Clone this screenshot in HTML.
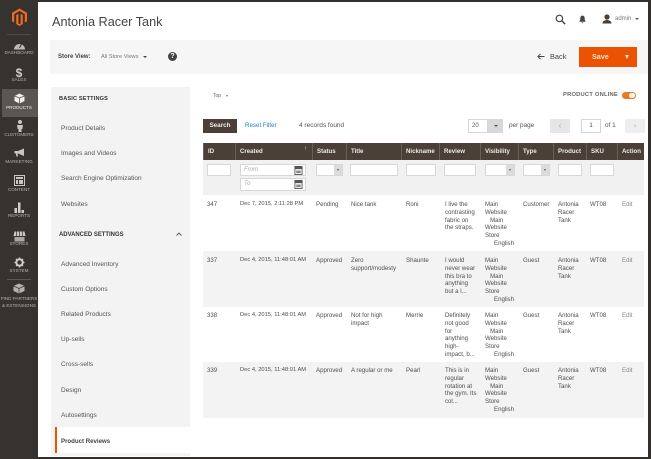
<!DOCTYPE html>
<html><head><meta charset="utf-8">
<style>
html,body{margin:0;padding:0}
body{width:651px;height:459px;position:relative;overflow:hidden;background:#fff;font-family:"Liberation Sans",sans-serif;color:#4a4a4a}
div,span,svg{position:absolute}
#w{left:0;top:0;width:651px;height:459px;overflow:hidden;background:#fff;filter:blur(.35px)}
.t{white-space:nowrap;font-size:7px;line-height:8px}
.nav{left:0;width:38px;text-align:center;font-size:4.6px;line-height:6px;color:#b5b2ae;white-space:nowrap}
.m{left:61px;font-size:6.5px;line-height:9px;color:#555;white-space:nowrap}
.h{top:143px;height:17px;line-height:18px;font-size:6.1px;font-weight:bold;color:#eeeae6;background:#4b3f38;border-left:1px solid #6a5f58;padding-left:4px;box-sizing:border-box;white-space:nowrap}
.inp{height:10px;background:#fff;border:1px solid #d8d8d8;box-sizing:border-box}
.c{font-size:6.1px;line-height:7.8px;color:#4f4f4f;white-space:nowrap}
.d{font-size:5.75px}
.sel{width:8px;height:10px;background:#dcdcdc;font-size:4px;line-height:10px;text-align:center;color:#555}
</style></head>
<body>
<div id="w">
<div style="left:0;top:0;width:651px;height:2px;background:#33302c"></div>
<div style="left:648px;top:0;width:3px;height:459px;background:#33302c"></div>
<div style="left:0;top:457px;width:651px;height:2px;background:#33302c"></div>
<div style="left:0;top:0;width:38px;height:459px;background:#353230"></div>
<div style="left:2px;top:89px;width:36px;height:28px;background:#5a5653"></div>

<svg style="left:11px;top:8px" width="17" height="18" viewBox="0 0 17 18"><path d="M8.5 0.5L16 4.8V13.4L13.8 14.6V6.1L8.5 3 3.2 6.1V14.6L1 13.4V4.8Z M7.4 5.8V15.5L8.5 16.2 9.6 15.5V5.8L11.8 7V16L8.5 18 5.2 16V7Z" fill="#ef6a23"/></svg>
<div style="left:7px;top:34px;width:24px;height:1px;background:#4d4945"></div>

<svg style="left:13px;top:41px" width="13" height="9" viewBox="0 0 13 9"><path d="M1 8.5A5.5 5.5 0 1 1 12 8.5Z" fill="#bdbab6"/><path d="M6.5 7L8.5 3" stroke="#373330" stroke-width="1"/></svg>
<div class="nav" style="top:50px">DASHBOARD</div>
<div class="nav" style="top:66px;font-size:12px;line-height:14px;color:#cfccc8;font-weight:bold">$</div>
<div class="nav" style="top:77px">SALES</div>
<svg style="left:14px;top:93px" width="11" height="11" viewBox="0 0 11 11"><path d="M5.5 0.5L10.5 3V8L5.5 10.5 0.5 8V3Z" fill="#f0efed"/><path d="M5.5 5V10.5M0.5 3L5.5 5 10.5 3" stroke="#54504c" stroke-width="0.8" fill="none"/></svg>
<div class="nav" style="top:105px;color:#f2efec">PRODUCTS</div>
<svg style="left:16px;top:120px" width="8" height="12" viewBox="0 0 8 12"><circle cx="4" cy="2" r="2" fill="#c8c5c1"/><path d="M1 5H7L6.4 9H5.5V12H2.5V9H1.6Z" fill="#c8c5c1"/></svg>
<div class="nav" style="top:132px">CUSTOMERS</div>
<svg style="left:14px;top:148px" width="11" height="9" viewBox="0 0 11 9"><path d="M0.5 3H4L10 0.5V8L4 5.5H3.5L4 8.5H2.5L1.8 5.5H0.5Z" fill="#c8c5c1"/></svg>
<div class="nav" style="top:159px">MARKETING</div>
<svg style="left:14px;top:175px" width="11" height="11" viewBox="0 0 11 11"><rect x="0.5" y="0.5" width="10" height="10" fill="none" stroke="#c8c5c1"/><rect x="2" y="2" width="7" height="2" fill="#c8c5c1"/><rect x="2" y="5" width="2" height="4" fill="#c8c5c1"/><rect x="5" y="5" width="4" height="4" fill="#c8c5c1"/></svg>
<div class="nav" style="top:187px">CONTENT</div>
<svg style="left:14px;top:202px" width="11" height="12" viewBox="0 0 11 12"><rect x="0.5" y="6" width="2.5" height="5" fill="#d0cdc9"/><rect x="4" y="0.5" width="2.5" height="10.5" fill="#d0cdc9"/><rect x="7.5" y="8" width="2.5" height="3" fill="#d0cdc9"/></svg>
<div class="nav" style="top:213px">REPORTS</div>
<svg style="left:13px;top:231px" width="13" height="11" viewBox="0 0 13 11"><path d="M1.5 0.5H11.5L12.5 5H0.5Z" fill="#c8c5c1"/><path d="M1.5 6H11.5V10.5H1.5Z" fill="#a9a6a2"/><path d="M3.5 0.5V5M6.5 0.5V5M9.5 0.5V5" stroke="#373330" stroke-width="0.7"/></svg>
<div class="nav" style="top:241px">STORES</div>
<svg style="left:14px;top:257px" width="11" height="11" viewBox="0 0 11 11"><circle cx="5.5" cy="5.5" r="3.2" fill="none" stroke="#d0cdc9" stroke-width="2"/><path d="M5.5 0.5V2.5M5.5 8.5V10.5M0.5 5.5H2.5M8.5 5.5H10.5M2 2L3.4 3.4M7.6 7.6L9 9M2 9L3.4 7.6M7.6 3.4L9 2" stroke="#d0cdc9" stroke-width="1.3"/></svg>
<div class="nav" style="top:268px">SYSTEM</div>
<div style="left:7px;top:279px;width:24px;height:1px;background:#5a5652"></div>
<svg style="left:13px;top:283px" width="12" height="11" viewBox="0 0 12 11"><path d="M6 0.5L11.5 3V8L6 10.5 0.5 8V3Z" fill="#b5b2ae"/><path d="M0.5 3L6 5.5 11.5 3M6 5.5V10.5" stroke="#373330" stroke-width="0.7" fill="none"/></svg>
<div class="nav" style="top:295px;font-size:4.6px;line-height:7px">FIND PARTNERS<br>&amp; EXTENSIONS</div>

<div class="t" style="left:52px;top:14px;font-size:12.7px;line-height:16px;color:#444">Antonia Racer Tank</div>

<svg style="left:555px;top:14px" width="11" height="11" viewBox="0 0 13 13"><circle cx="5.2" cy="5.2" r="3.8" fill="none" stroke="#444" stroke-width="1.4"/><path d="M8 8L12 12" stroke="#444" stroke-width="1.6"/></svg>
<svg style="left:579px;top:15px" width="7" height="9" viewBox="0 0 8 10"><path d="M4 0.5C6 0.5 6.5 2 6.5 4C6.5 6 7.5 7 7.5 7.5H0.5C0.5 7 1.5 6 1.5 4C1.5 2 2 0.5 4 0.5ZM3 8.2H5L4 9.5Z" fill="#444"/></svg>
<svg style="left:602px;top:14px" width="10" height="10" viewBox="0 0 10 10"><circle cx="5" cy="3" r="2.6" fill="#4a3e36"/><path d="M0.5 9.5C0.5 7 3 6 5 6C7 6 9.5 7 9.5 9.5Z" fill="#4a3e36"/></svg>
<div class="t" style="left:615px;top:15px;font-size:6px;color:#777">admin</div>
<div style="left:635px;top:18px;width:0;height:0;border-left:2px solid transparent;border-right:2px solid transparent;border-top:2.5px solid #555"></div>

<div style="left:50px;top:40px;width:598px;height:34px;background:#f6f6f6"></div>
<div class="t" style="left:58px;top:53px;font-size:6px;font-weight:bold;color:#444">Store View:</div>
<div class="t" style="left:101px;top:53px;font-size:5.6px;color:#777">All Store Views</div>
<div style="left:143px;top:56px;width:0;height:0;border-left:2px solid transparent;border-right:2px solid transparent;border-top:2.5px solid #444"></div>
<div style="left:168px;top:52px;width:9px;height:9px;border-radius:50%;background:#444;color:#fff;font-size:7px;line-height:9px;text-align:center;font-weight:bold">?</div>

<svg style="left:537px;top:53px" width="8" height="7" viewBox="0 0 8 7"><path d="M7.5 3.5H1M3.5 0.8L0.8 3.5 3.5 6.2" fill="none" stroke="#444" stroke-width="0.9"/></svg>
<div class="t" style="left:550px;top:52px;font-size:7.4px;line-height:9px;color:#444">Back</div>
<div style="left:579px;top:47px;width:58px;height:20px;background:#eb5202"></div>
<div class="t" style="left:592px;top:52px;font-size:7.2px;line-height:10px;font-weight:bold;color:#f9e2d2">Save</div>
<div style="left:625px;top:55px;width:0;height:0;border-left:2.5px solid transparent;border-right:2.5px solid transparent;border-top:4px solid #fbe8dc"></div>

<div style="left:51px;top:87px;width:139px;height:369px;background:#f3f3f3"></div>
<div class="t" style="left:59px;top:95px;font-size:5.6px;font-weight:bold;color:#333;letter-spacing:.15px">BASIC SETTINGS</div>
<div class="m" style="top:124px">Product Details</div>
<div class="m" style="top:149px">Images and Videos</div>
<div class="m" style="top:174px">Search Engine Optimization</div>
<div class="m" style="top:200px">Websites</div>
<div class="t" style="left:59px;top:231px;font-size:5.95px;font-weight:bold;color:#333">ADVANCED SETTINGS</div>
<svg style="left:176px;top:232px" width="6" height="4" viewBox="0 0 6 4"><path d="M0.5 3.5L3 1 5.5 3.5" fill="none" stroke="#555" stroke-width="0.9"/></svg>
<div class="m" style="top:260px">Advanced Inventory</div>
<div class="m" style="top:285px">Custom Options</div>
<div class="m" style="top:310px">Related Products</div>
<div class="m" style="top:335px">Up-sells</div>
<div class="m" style="top:360px">Cross-sells</div>
<div class="m" style="top:386px">Design</div>
<div class="m" style="top:411px">Autosettings</div>
<div style="left:55px;top:427px;width:135px;height:26px;background:#fff"></div>
<div style="left:55px;top:427px;width:1.5px;height:26px;background:#eb5202"></div>
<div class="m" style="top:437px;font-size:6.1px;font-weight:bold;color:#444">Product Reviews</div>

<div class="t" style="left:213px;top:92px;font-size:5px;color:#666">Top</div>
<div style="left:226px;top:95px;width:0;height:0;border-left:1.5px solid transparent;border-right:1.5px solid transparent;border-top:2px solid #777"></div>
<div class="t" style="left:563px;top:91px;font-size:5.8px;font-weight:bold;color:#666;letter-spacing:.2px">PRODUCT ONLINE</div>
<div style="left:622px;top:92px;width:14px;height:7px;border-radius:4px;background:#eb7a1e"></div>
<div style="left:629px;top:93px;width:6px;height:5px;border-radius:3px;background:#fff"></div>

<div style="left:203px;top:119px;width:34px;height:14px;background:#4b3f38;color:#f0ece8;font-size:6.3px;line-height:14px;text-align:center;font-weight:bold">Search</div>
<div class="t" style="left:245px;top:122px;font-size:6.2px;color:#1f7fcb">Reset Filter</div>
<div class="t" style="left:299px;top:122px;font-size:6.5px;color:#555">4 records found</div>

<div style="left:468px;top:119px;width:20px;height:14px;background:#fff;border:1px solid #d5d5d5;box-sizing:border-box;font-size:6px;line-height:12px;padding-left:3px;color:#555">20</div>
<div style="left:488px;top:119px;width:15px;height:14px;background:#d8d8d8"></div>
<div style="left:494px;top:125px;width:0;height:0;border-left:2px solid transparent;border-right:2px solid transparent;border-top:2.5px solid #555"></div>
<div class="t" style="left:509px;top:122px;font-size:6.4px;color:#555">per page</div>
<div style="left:550px;top:119px;width:20px;height:14px;background:#e6e6e6;color:#aaa;font-size:8px;line-height:13px;text-align:center">&lsaquo;</div>
<div style="left:581px;top:119px;width:20px;height:14px;background:#fff;border:1px solid #d5d5d5;box-sizing:border-box;font-size:6px;line-height:12px;text-align:center;color:#444">1</div>
<div class="t" style="left:605px;top:122px;font-size:6.4px;color:#555">of 1</div>
<div style="left:625px;top:119px;width:20px;height:14px;background:#eee;color:#b5b5b5;font-size:8px;line-height:13px;text-align:center">&rsaquo;</div>

<div class="h" style="left:203px;width:32px;padding-left:4px">ID</div>
<div class="h" style="left:235px;width:77px">Created</div>
<div style="left:304px;top:146px;color:#ddd;font-size:6px;line-height:6px">&#8593;</div>
<div class="h" style="left:312px;width:34px">Status</div>
<div class="h" style="left:346px;width:55px">Title</div>
<div class="h" style="left:401px;width:38px">Nickname</div>
<div class="h" style="left:439px;width:41px">Review</div>
<div class="h" style="left:480px;width:38px">Visibility</div>
<div class="h" style="left:518px;width:35px">Type</div>
<div class="h" style="left:553px;width:33px">Product</div>
<div class="h" style="left:586px;width:31px">SKU</div>
<div class="h" style="left:617px;width:27px">Action</div>

<div style="left:203px;top:160px;width:441px;height:35px;background:#f1f1f1"></div>
<div class="inp" style="left:207px;top:164px;width:24px;height:12px"></div>
<div class="inp" style="left:240px;top:164px;width:66px;height:12px;font-size:6px;line-height:10px;padding-left:3px;color:#aaa;font-style:italic">From</div>
<div class="inp" style="left:240px;top:178px;width:66px;height:13px;font-size:6px;line-height:11px;padding-left:3px;color:#aaa;font-style:italic">To</div>
<svg style="left:294px;top:166px" width="9" height="9" viewBox="0 0 9 10"><rect x="0.5" y="0.5" width="8" height="9" fill="#fff" stroke="#555"/><rect x="0.5" y="0.5" width="8" height="3" fill="#555"/><rect x="2" y="5" width="5" height="3" fill="#888"/></svg>
<svg style="left:294px;top:180px" width="9" height="9" viewBox="0 0 9 10"><rect x="0.5" y="0.5" width="8" height="9" fill="#fff" stroke="#555"/><rect x="0.5" y="0.5" width="8" height="3" fill="#555"/><rect x="2" y="5" width="5" height="3" fill="#888"/></svg>
<div class="inp" style="left:316px;top:164px;width:27px;height:12px"></div><div class="sel" style="left:334px;top:165px">&#9662;</div>
<div class="inp" style="left:350px;top:164px;width:48px;height:12px"></div>
<div class="inp" style="left:406px;top:164px;width:30px;height:12px"></div>
<div class="inp" style="left:444px;top:164px;width:32px;height:12px"></div>
<div class="inp" style="left:485px;top:164px;width:30px;height:12px"></div><div class="sel" style="left:506px;top:165px">&#9662;</div>
<div class="inp" style="left:523px;top:164px;width:27px;height:12px"></div><div class="sel" style="left:541px;top:165px">&#9662;</div>
<div class="inp" style="left:558px;top:164px;width:24px;height:12px"></div>
<div class="inp" style="left:590px;top:164px;width:24px;height:12px"></div>

<div style="left:203px;top:251px;width:441px;height:56px;background:#f3f3f3"></div>
<div style="left:203px;top:362px;width:441px;height:56px;background:#f3f3f3"></div>

<div class="c" style="left:207px;top:201px">347</div>
<div class="c d" style="left:240px;top:201px">Dec 7, 2015, 2:11:28 PM</div>
<div class="c" style="left:316px;top:201px">Pending</div>
<div class="c" style="left:351px;top:201px">Nice tank</div>
<div class="c" style="left:406px;top:201px">Roni</div>
<div class="c" style="left:445px;top:201px">I live the<br>contrasting<br>fabric on<br>the straps.</div>
<div class="c" style="left:485px;top:201px">Main<br>Website<br>&nbsp;&nbsp;&nbsp;Main<br>Website<br>Store<br><span style="position:static;padding-left:9px">English</span></div>
<div class="c" style="left:523px;top:201px">Customer</div>
<div class="c" style="left:558px;top:201px">Antonia<br>Racer<br>Tank</div>
<div class="c" style="left:590px;top:201px">WT08</div>
<div class="c" style="left:622px;top:201px;color:#888">Edit</div>

<div class="c" style="left:207px;top:257px">337</div>
<div class="c d" style="left:240px;top:257px">Dec 4, 2015, 11:48:01 AM</div>
<div class="c" style="left:316px;top:257px">Approved</div>
<div class="c" style="left:351px;top:257px">Zero<br>support/modesty</div>
<div class="c" style="left:406px;top:257px">Shaunte</div>
<div class="c" style="left:445px;top:257px">I would<br>never wear<br>this bra to<br>anything<br>but a l...</div>
<div class="c" style="left:485px;top:257px">Main<br>Website<br>&nbsp;&nbsp;&nbsp;Main<br>Website<br>Store<br><span style="position:static;padding-left:9px">English</span></div>
<div class="c" style="left:523px;top:257px">Guest</div>
<div class="c" style="left:558px;top:257px">Antonia<br>Racer<br>Tank</div>
<div class="c" style="left:590px;top:257px">WT08</div>
<div class="c" style="left:622px;top:257px;color:#888">Edit</div>

<div class="c" style="left:207px;top:312px">338</div>
<div class="c d" style="left:240px;top:312px">Dec 4, 2015, 11:48:01 AM</div>
<div class="c" style="left:316px;top:312px">Approved</div>
<div class="c" style="left:351px;top:312px">Not for high<br>impact</div>
<div class="c" style="left:406px;top:312px">Merrie</div>
<div class="c" style="left:445px;top:312px">Definitely<br>not good<br>for<br>anything<br>high-<br>impact, b...</div>
<div class="c" style="left:485px;top:312px">Main<br>Website<br>&nbsp;&nbsp;&nbsp;Main<br>Website<br>Store<br><span style="position:static;padding-left:9px">English</span></div>
<div class="c" style="left:523px;top:312px">Guest</div>
<div class="c" style="left:558px;top:312px">Antonia<br>Racer<br>Tank</div>
<div class="c" style="left:590px;top:312px">WT08</div>
<div class="c" style="left:622px;top:312px;color:#888">Edit</div>

<div class="c" style="left:207px;top:367px">339</div>
<div class="c d" style="left:240px;top:367px">Dec 4, 2015, 11:48:01 AM</div>
<div class="c" style="left:316px;top:367px">Approved</div>
<div class="c" style="left:351px;top:367px">A regular or me</div>
<div class="c" style="left:406px;top:367px">Pearl</div>
<div class="c" style="left:445px;top:367px">This is in<br>regular<br>rotation at<br>the gym. Its<br>col...</div>
<div class="c" style="left:485px;top:367px">Main<br>Website<br>&nbsp;&nbsp;&nbsp;Main<br>Website<br>Store<br><span style="position:static;padding-left:9px">English</span></div>
<div class="c" style="left:523px;top:367px">Guest</div>
<div class="c" style="left:558px;top:367px">Antonia<br>Racer<br>Tank</div>
<div class="c" style="left:590px;top:367px">WT08</div>
<div class="c" style="left:622px;top:367px;color:#888">Edit</div>
</div>
</body></html>
